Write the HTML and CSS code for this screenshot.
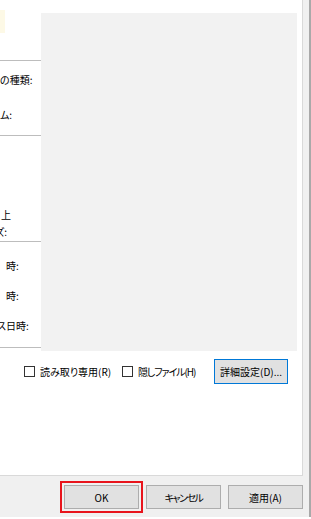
FILE: index.html
```html
<!DOCTYPE html>
<html>
<head>
<meta http-equiv="Content-Type" content="text/html; charset=utf-8"/>
<title>プロパティ</title>
<link rel="stylesheet" href="styles.css">
</head>
<body>
<div class="window">
  <div class="frame">
    <div class="panel">
      <div class="info">
        <div class="labels">
          <div class="icon-area"><div class="icon-edge"></div></div>
          <div class="group g1">
            <div class="lbl">の種類:</div>
            <div class="lbl">ム:</div>
          </div>
          <div class="group g2">
            <div class="lbl shift-2">上</div>
            <div class="lbl shift-3">ズ:</div>
          </div>
          <div class="group g3">
            <div class="lbl shift-4">時:</div>
            <div class="lbl shift-4">時:</div>
            <div class="lbl shift-5">ス日時:</div>
          </div>
        </div>
        <div class="preview"></div>
      </div>
      <div class="attrs">
        <label class="check check-ro"><span class="box"></span><span class="cap">読み取り専用(R)</span></label>
        <label class="check check-hidden"><span class="box"></span><span class="cap tight">隠しファイル(H)</span></label>
        <button class="btn btn-detail">詳細設定(D)...</button>
      </div>
    </div>
    <div class="actions">
      <button class="btn btn-ok">OK</button>
      <button class="btn tight-more">キャンセル</button>
      <button class="btn">適用(A)</button>
    </div>
  </div>
  <div class="edge"></div>
</div>
</body>
</html>
```

FILE: styles.css
```css
html, body {
  margin: 0;
  padding: 0;
  background: white;
}

body {
  font-family: "Noto Sans CJK JP", "Noto Sans", sans-serif;
  font-size: 10px;
  font-feature-settings: "palt";
  color: #000;
  width: 311px;
  height: 519px;
  overflow: hidden;
}

.window {
  display: flex;
  height: 517px;
}

.frame {
  width: 309px;
  background: #f0f0f0;
}

.edge {
  width: 2px;
  background: #a9a9a9;
}

.panel {
  width: 302px;
  height: 475px;
  background: white;
  border-right: 1px solid #d9d9d9;
  border-bottom: 1px solid #d9d9d9;
}

.info {
  display: flex;
  height: 351px;
}

.labels {
  width: 41px;
  flex: none;
  overflow: hidden;
  white-space: nowrap;
}

.icon-area {
  height: 50px;
  padding-top: 10px;
  border-bottom: 1px solid #bdbdbd;
}

.icon-edge {
  width: 5px;
  height: 23px;
  background: #fdf9e6;
}

.group {
  display: flex;
  flex-direction: column;
  box-sizing: border-box;
  border-bottom: 1px solid #bdbdbd;
}

.lbl {
  line-height: 16px;
}

.g1 {
  height: 75px;
  padding-top: 11px;
  gap: 19px;
}

.g2 {
  height: 106px;
  padding-top: 70px;
}

.g2 .lbl {
  line-height: 17px;
}

.g3 {
  height: 106px;
  padding-top: 16px;
  gap: 14px;
}

.shift-2 { margin-left: 1px; }
.shift-3 { margin-left: -5px; }
.shift-4 { padding-left: 6px; }
.shift-5 { margin-left: -3px; }

.preview {
  width: 256px;
  height: 338px;
  margin-top: 13px;
  background: #f2f2f2;
}

.attrs {
  display: flex;
  align-items: center;
  padding: 8px 0 0 24px;
}

.check {
  display: flex;
  align-items: center;
  flex: none;
  gap: 5px;
  white-space: nowrap;
}

.check-ro {
  width: 88px;
  margin-right: 10px;
}

.check-hidden {
  width: 76px;
  margin-right: 16px;
}

.tight {
  letter-spacing: -1.1px;
}

.tight-more {
  letter-spacing: -1.5px;
}

.box {
  flex: none;
  width: 9px;
  height: 9px;
  border: 1px solid #333;
  background: white;
}

.btn {
  font-family: inherit;
  font-size: 10px;
  font-feature-settings: "palt";
  color: #000;
  background: #e1e1e1;
  border: 1px solid #adadad;
  height: 24px;
  width: 75px;
  padding: 0;
  margin: 0;
  flex: none;
  white-space: nowrap;
}

.btn-detail {
  width: 74px;
  height: 25px;
  border-color: #0078d7;
}

.actions {
  display: flex;
  justify-content: flex-end;
  gap: 7px;
  padding: 9px 6px 0 0;
}

.btn-ok {
  outline: 2px solid #e8141c;
  outline-offset: 2px;
}
```
